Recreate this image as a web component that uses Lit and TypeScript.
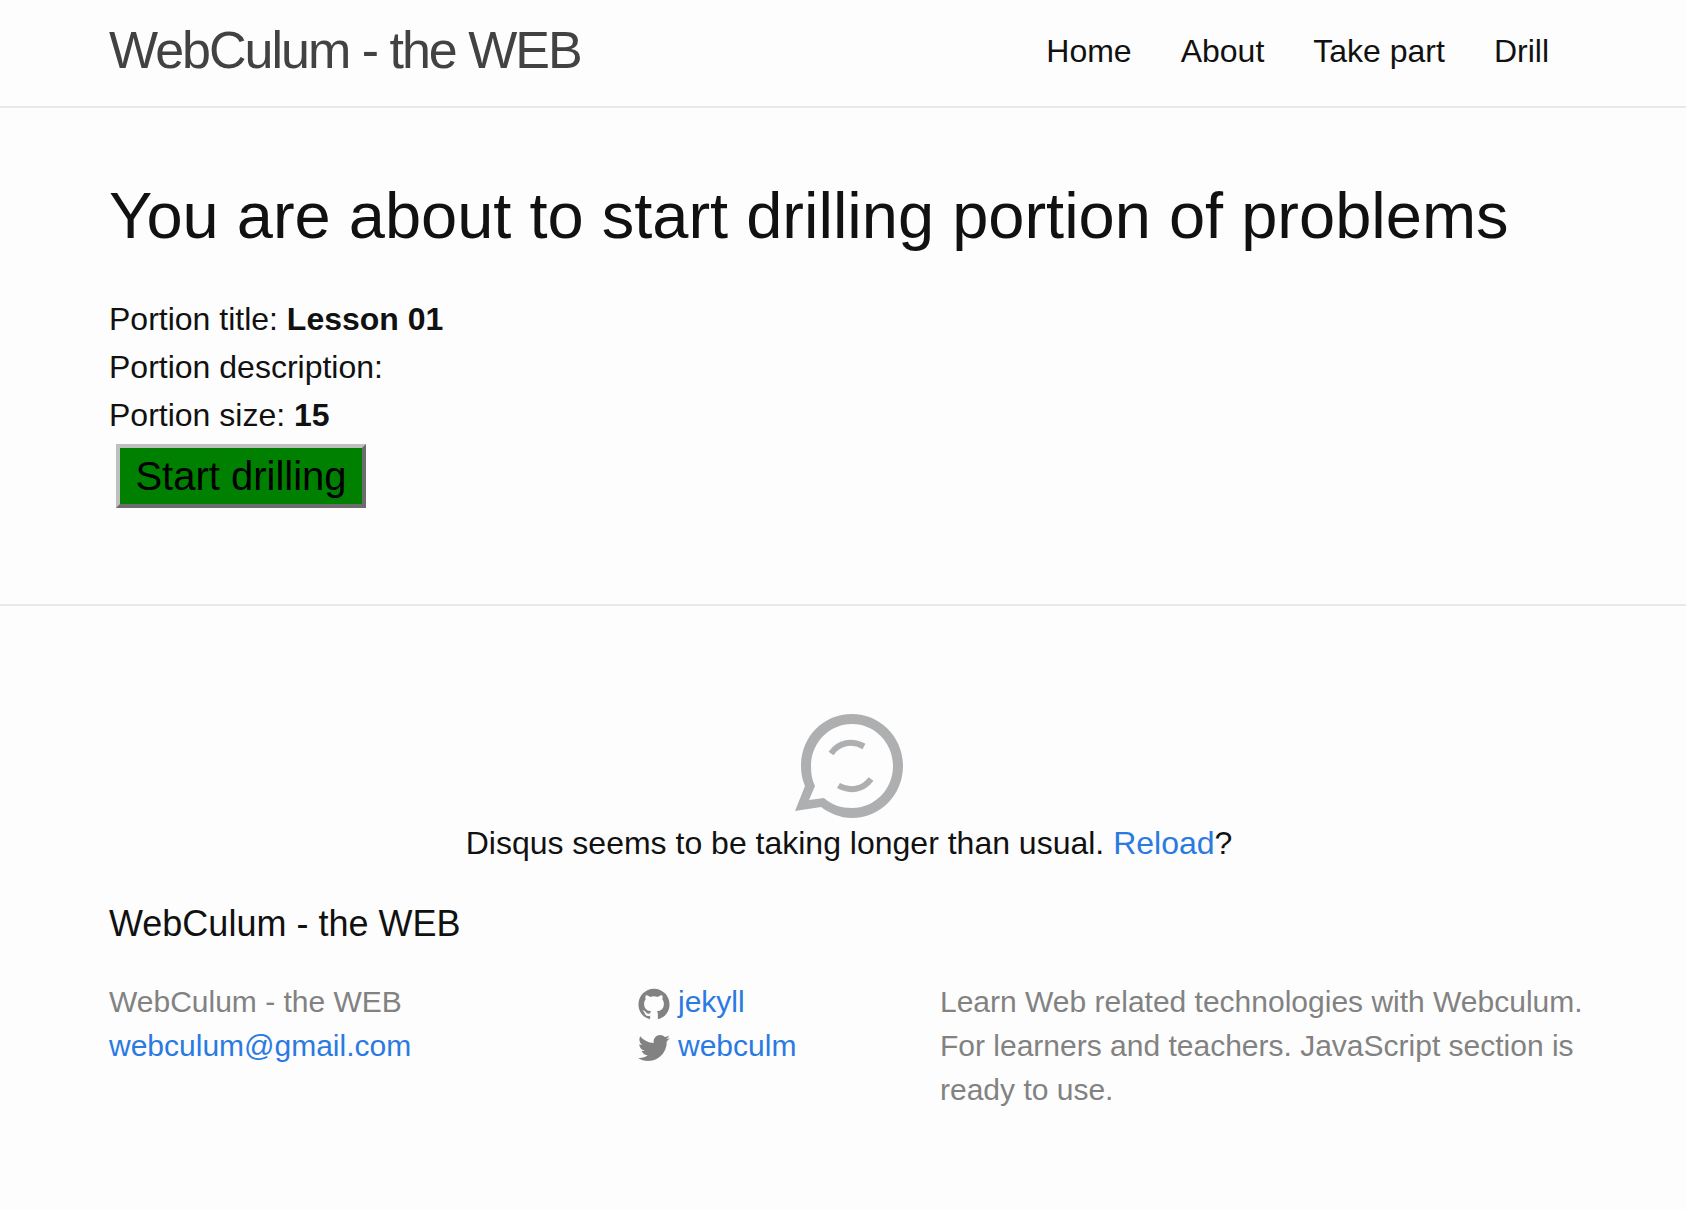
import { LitElement, html, css } from "lit";
import { customElement } from "lit/decorators.js";

const NAV = ["Home", "About", "Take part", "Drill"];

@customElement("app-root")
export class AppRoot extends LitElement {
  static styles = css`
    :host {
      display: block;
      box-sizing: border-box;
      min-height: 100vh;
      background: #fdfdfd;
      color: #111;
      font: 400 32px/48px "Helvetica Neue", "Liberation Sans", Arial, sans-serif;
    }
    h1, h2, p, ul { margin: 0; padding: 0; font-weight: 400; list-style: none; }
    a { color: #2a7ae2; text-decoration: none; }
    a:hover { text-decoration: underline; }
    .band { padding-left: 12px; }
    .wrapper { max-width: 1480px; margin: 0 auto; }
    .header { border-bottom: 2px solid #e8e8e8; }
    .bar { display: flex; justify-content: space-between; align-items: flex-start; min-height: 106px; }
    .title { font-size: 52px; line-height: 100px; font-weight: 300; letter-spacing: -2px; color: #424242; }
    .nav { display: flex; gap: 49px; padding-right: 40px; line-height: 102px; }
    .nav a { color: #111; }
    .main { padding-top: 60px; padding-bottom: 96px; }
    .heading { font-size: 65px; line-height: 96px; margin-bottom: 31px; }
    .start {
      display: block;
      min-width: 250px;
      margin: 5px 0 0 7px;
      padding: 4px 12px;
      border: 4px solid;
      border-color: #bfbfbf #6c6c6c #6c6c6c #bfbfbf;
      background: #008000;
      color: #000;
      font: inherit;
      font-size: 40px;
      line-height: 48px;
    }
    .footer { border-top: 2px solid #e8e8e8; padding-top: 108px; padding-bottom: 60px; }
    .comments { display: flex; flex-direction: column; align-items: center; text-align: center; }
    .bubble { display: block; width: 108px; height: 105px; }
    .brand { font-size: 36px; line-height: 54px; margin: 30px 0 29px; }
    .cols {
      display: grid;
      grid-template-columns: 529fr 302fr 649fr;
      font-size: 30px;
      line-height: 44px;
      color: #828282;
    }
    .social { display: flex; align-items: center; gap: 8px; }
    .icon { width: 32px; height: 32px; fill: #828282; margin-top: 4px; }
  `;

  render() {
    return html`
      <header class="header band">
        <div class="wrapper bar">
          <a class="title" href="#">WebCulum - the WEB</a>
          <nav class="nav">${NAV.map((n) => html`<a href="#">${n}</a>`)}</nav>
        </div>
      </header>
      <main class="main band">
        <div class="wrapper">
          <h1 class="heading">You are about to start drilling portion of problems</h1>
          <p>Portion title: <b>Lesson 01</b></p>
          <p>Portion description:</p>
          <p>Portion size: <b>15</b></p>
          <button class="start" type="button">Start drilling</button>
        </div>
      </main>
      <footer class="footer band">
        <div class="wrapper">
          <div class="comments">
            <svg class="bubble" viewBox="0 0 108 105" fill="none" stroke="#adafb1" aria-hidden="true">
              <path fill="#adafb1" stroke="none" fill-rule="evenodd"
                d="M57 0C85 0 108 23 108 52C108 81 85 104 57 104C45 104 34 99 26 93L0 97L10 72C7 65 6 59 6 52C6 23 28 0 57 0ZM57 10C34 10 16 29 16 52C16 60 17 66 20 72L14 86L29 84C37 91 46 94 57 94C80 94 98 75 98 52C98 29 80 10 57 10Z" />
              <path stroke-width="6" d="M36 39.500C44 28 57 26 69 32.500M43.500 71.500C55 78 68 76 76 65" />
            </svg>
            <p>Disqus seems to be taking longer than usual. <a href="#">Reload</a>?</p>
          </div>
          <h2 class="brand">WebCulum - the WEB</h2>
          <div class="cols">
            <ul>
              <li>WebCulum - the WEB</li>
              <li><a href="mailto:webculum@gmail.com">webculum@gmail.com</a></li>
            </ul>
            <ul>
              <li class="social">
                <svg class="icon" viewBox="0 0 16 16" aria-hidden="true"><path d="M7.999,0.431c-4.285,0-7.760,3.474-7.760,7.761 c0,3.428,2.223,6.337,5.307,7.363c0.388,0.071,0.530-0.168,0.530-0.374c0-0.184-0.007-0.672-0.010-1.320 c-2.159,0.469-2.614-1.040-2.614-1.040c-0.353-0.896-0.862-1.135-0.862-1.135c-0.705-0.481,0.053-0.472,0.053-0.472 c0.779,0.055,1.189,0.800,1.189,0.800c0.692,1.186,1.816,0.843,2.258,0.645c0.071-0.502,0.271-0.843,0.493-1.037 C4.860,11.425,3.049,10.760,3.049,7.786c0-0.847,0.302-1.540,0.799-2.082C3.768,5.507,3.501,4.718,3.924,3.650 c0,0,0.652-0.209,2.134,0.796C6.677,4.273,7.340,4.187,8,4.184c0.659,0.003,1.323,0.089,1.943,0.261 c1.482-1.004,2.132-0.796,2.132-0.796c0.423,1.068,0.157,1.857,0.077,2.054c0.497,0.542,0.798,1.235,0.798,2.082 c0,2.981-1.814,3.637-3.543,3.829c0.279,0.240,0.527,0.713,0.527,1.437c0,1.037-0.010,1.874-0.010,2.129 c0,0.208,0.140,0.449,0.534,0.373c3.081-1.028,5.302-3.935,5.302-7.362C15.760,3.906,12.285,0.431,7.999,0.431z" /></svg>
                <a href="#">jekyll</a>
              </li>
              <li class="social">
                <svg class="icon" viewBox="0 0 16 16" aria-hidden="true"><path d="M15.969,3.058c-0.586,0.260-1.217,0.436-1.878,0.515c0.675-0.405,1.194-1.045,1.438-1.809c-0.632,0.375-1.332,0.647-2.076,0.793c-0.596-0.636-1.446-1.033-2.387-1.033c-1.806,0-3.270,1.464-3.270,3.270 c0,0.256,0.029,0.506,0.085,0.745C5.163,5.404,2.753,4.102,1.140,2.124C0.859,2.607,0.698,3.168,0.698,3.767 c0,1.134,0.577,2.135,1.455,2.722C1.616,6.472,1.112,6.325,0.671,6.080c0,0.014,0,0.027,0,0.041c0,1.584,1.127,2.906,2.623,3.206 C3.020,9.402,2.731,9.442,2.433,9.442c-0.211,0-0.416-0.021-0.615-0.059c0.416,1.299,1.624,2.245,3.055,2.271 c-1.119,0.877-2.529,1.400-4.061,1.400c-0.264,0-0.524-0.015-0.780-0.046c1.447,0.928,3.166,1.469,5.013,1.469 c6.015,0,9.304-4.983,9.304-9.304c0-0.142-0.003-0.283-0.009-0.423C14.976,4.290,15.531,3.714,15.969,3.058z" /></svg>
                <a href="#">webculm</a>
              </li>
            </ul>
            <p>Learn Web related technologies with Webculum. For learners and teachers. JavaScript section is ready to use.</p>
          </div>
        </div>
      </footer>
    `;
  }
}
